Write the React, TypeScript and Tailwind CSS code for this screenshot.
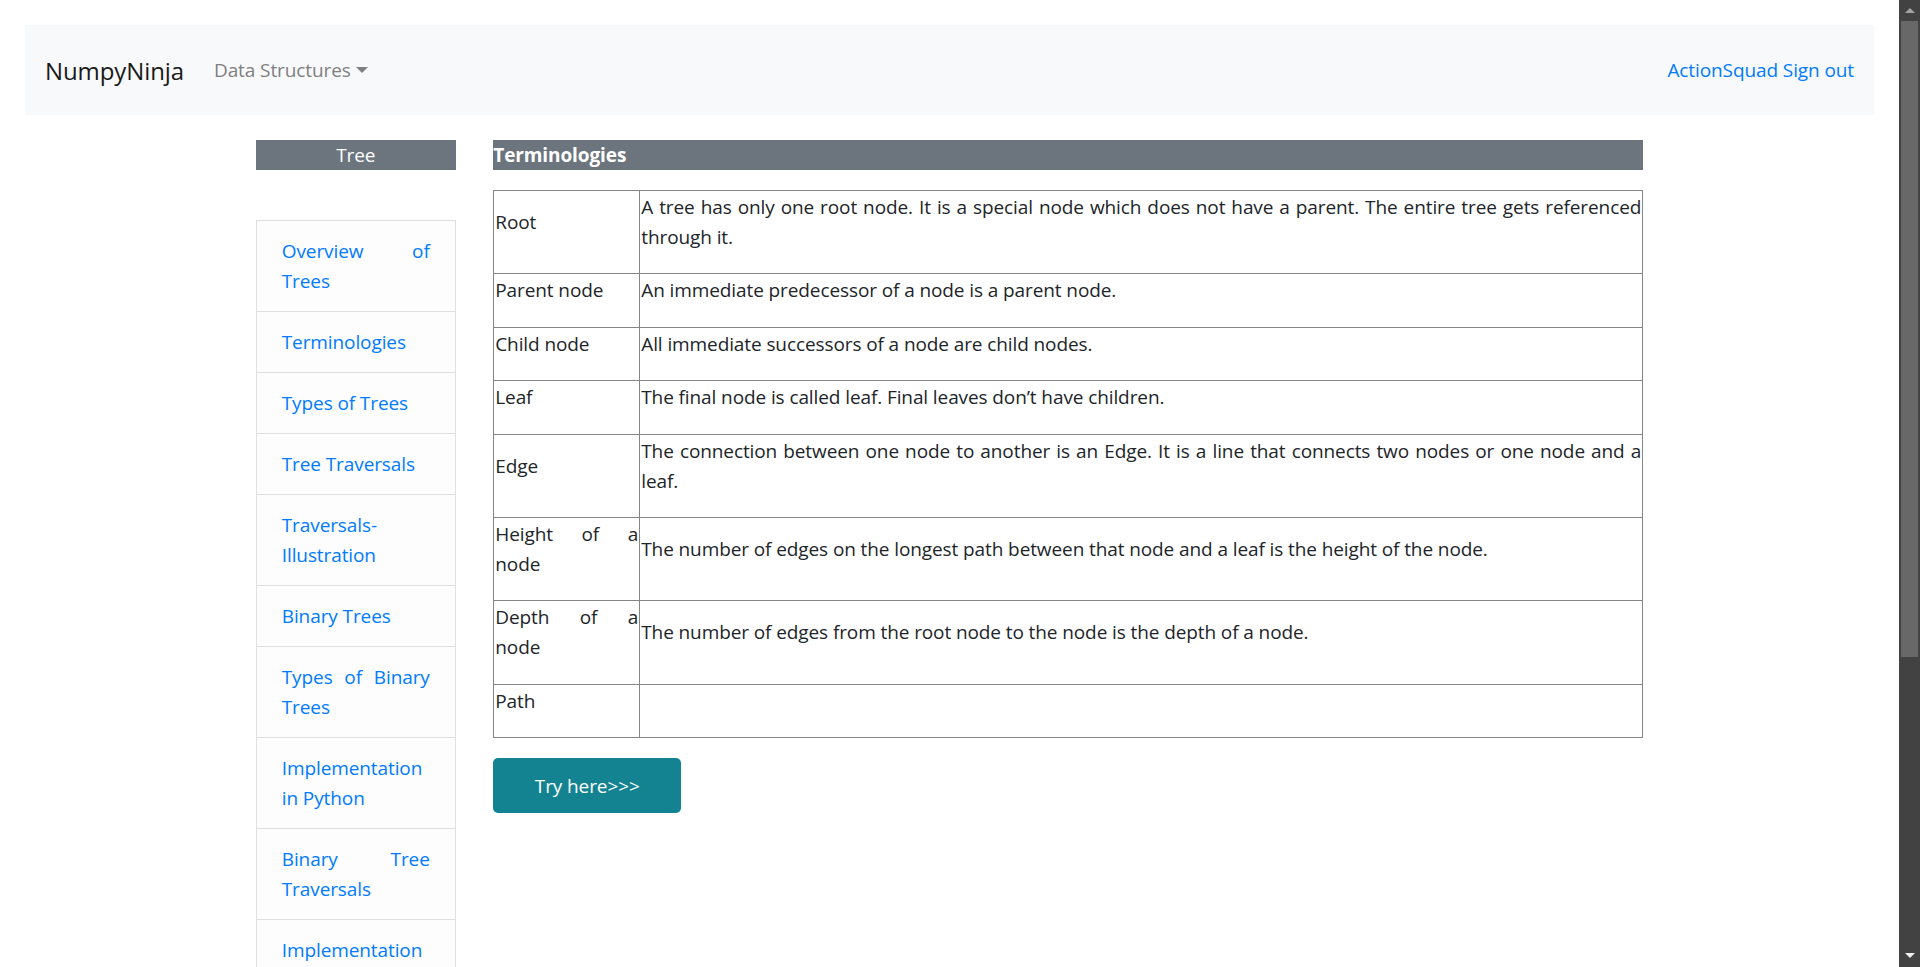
import React from "react";

const font = { fontFamily: '"Open Sans", "Noto Sans", Arial, sans-serif' };

type Item = { lines: string[] };

const sideItems: Item[] = [
  { lines: ["Overview of", "Trees"] },
  { lines: ["Terminologies"] },
  { lines: ["Types of Trees"] },
  { lines: ["Tree Traversals"] },
  { lines: ["Traversals-", "Illustration"] },
  { lines: ["Binary Trees"] },
  { lines: ["Types of Binary", "Trees"] },
  { lines: ["Implementation", "in Python"] },
  { lines: ["Binary Tree", "Traversals"] },
  { lines: ["Implementation", "of Binary Trees"] },
  { lines: ["Applications of", "Binary trees"] },
];

type Row = { term: string[]; desc: string[] };

const rows: Row[] = [
  {
    term: ["Root"],
    desc: [
      "A tree has only one root node. It is a special node which does not have a parent. The entire tree gets referenced",
      "through it.",
    ],
  },
  { term: ["Parent node"], desc: ["An immediate predecessor of a node is a parent node."] },
  { term: ["Child node"], desc: ["All immediate successors of a node are child nodes."] },
  { term: ["Leaf"], desc: ["The final node is called leaf. Final leaves don\u2019t have children."] },
  {
    term: ["Edge"],
    desc: [
      "The connection between one node to another is an Edge. It is a line that connects two nodes or one node and a",
      "leaf.",
    ],
  },
  {
    term: ["Height of a", "node"],
    desc: ["The number of edges on the longest path between that node and a leaf is the height of the node."],
  },
  {
    term: ["Depth of a", "node"],
    desc: ["The number of edges from the root node to the node is the depth of a node."],
  },
  { term: ["Path"], desc: [] },
];

function Lines({ lines }: { lines: string[] }) {
  return (
    <>
      {lines.map((l, i) =>
        i < lines.length - 1 ? (
          <span key={i} className="block whitespace-nowrap text-justify [text-align-last:justify]">
            {l}
          </span>
        ) : (
          <span key={i} className="block">
            {l}
          </span>
        )
      )}
    </>
  );
}

export default function App() {
  return (
    <div className="flex h-screen w-full overflow-hidden bg-white tracking-[-0.1px] text-[#212529]" style={font}>
      <div className="min-w-0 flex-1">
        <div className="px-[25px] pt-[25px]">
          <nav className="flex h-[90px] items-center bg-[#f8f9fa] px-[20px]">
            <span className="mr-[20px] text-[24px] leading-[37px] text-[#1a1a1a]">NumpyNinja</span>
            <span className="flex items-center pl-[10px] text-[19px] leading-[30px] text-[#7f8081]">
              Data Structures
              <span className="ml-[5px] inline-block h-0 w-0 border-x-[6px] border-t-[6px] border-x-transparent border-t-[#7f8081]"></span>
            </span>
            <span className="ml-auto text-[19px] leading-[30px] text-[#007bff]">ActionSquad Sign out</span>
          </nav>
        </div>

        <div className="mx-auto mt-[25px] flex w-[1387.5px] gap-[37.5px]">
          <aside className="w-[200px] shrink-0">
            <div className="h-[30px] bg-[#6c757d] text-center text-[19px] leading-[30px] text-white">Tree</div>
            <ul className="mt-[50px] border-t border-[#dfdfdf]">
              {sideItems.map((it, i) => (
                <li
                  key={i}
                  className="border-x border-b border-[#dfdfdf] bg-[#fdfdfd] px-[25px] py-[15px] text-[19px] leading-[30px] text-[#007bff]"
                >
                  <Lines lines={it.lines} />
                </li>
              ))}
            </ul>
          </aside>

          <main className="w-[1150px] shrink-0">
            <div className="h-[30px] bg-[#6c757d] text-[19px] font-bold leading-[30px] text-white">Terminologies</div>
            <table className="mt-[20px] w-full border-collapse border border-[#858585] text-[19px] leading-[30px]">
              <tbody>
                {rows.map((r, i) => (
                  <tr key={i}>
                    <td className="w-[146px] border border-[#858585] p-[1px] align-middle">
                      <div className="mb-[20.4px]">
                        <Lines lines={r.term} />
                      </div>
                    </td>
                    <td className="border border-[#858585] p-[1px] align-middle">
                      <div className="mb-[20.4px]">
                        {r.desc.length > 0 ? <Lines lines={r.desc} /> : null}
                      </div>
                    </td>
                  </tr>
                ))}
              </tbody>
            </table>
            <button className="mt-[20px] flex h-[55px] w-[188px] items-center justify-center rounded-[5px] bg-[#148391] text-[19px] leading-[30px] text-white">
              Try here&gt;&gt;&gt;
            </button>
          </main>
        </div>
      </div>

      <div className="flex h-screen w-[21px] shrink-0 flex-col bg-[#424242]">
        <div className="flex h-[21px] items-center justify-center">
          <span className="inline-block h-0 w-0 border-x-[5px] border-b-[5px] border-x-transparent border-b-[#a3a3a3]"></span>
        </div>
        <div className="mx-[2px] h-[636px] bg-[#686868]"></div>
        <div className="flex-1"></div>
        <div className="flex h-[24px] items-center justify-center">
          <span className="inline-block h-0 w-0 border-x-[5px] border-t-[5px] border-x-transparent border-t-[#f0f0f0]"></span>
        </div>
      </div>
    </div>
  );
}
